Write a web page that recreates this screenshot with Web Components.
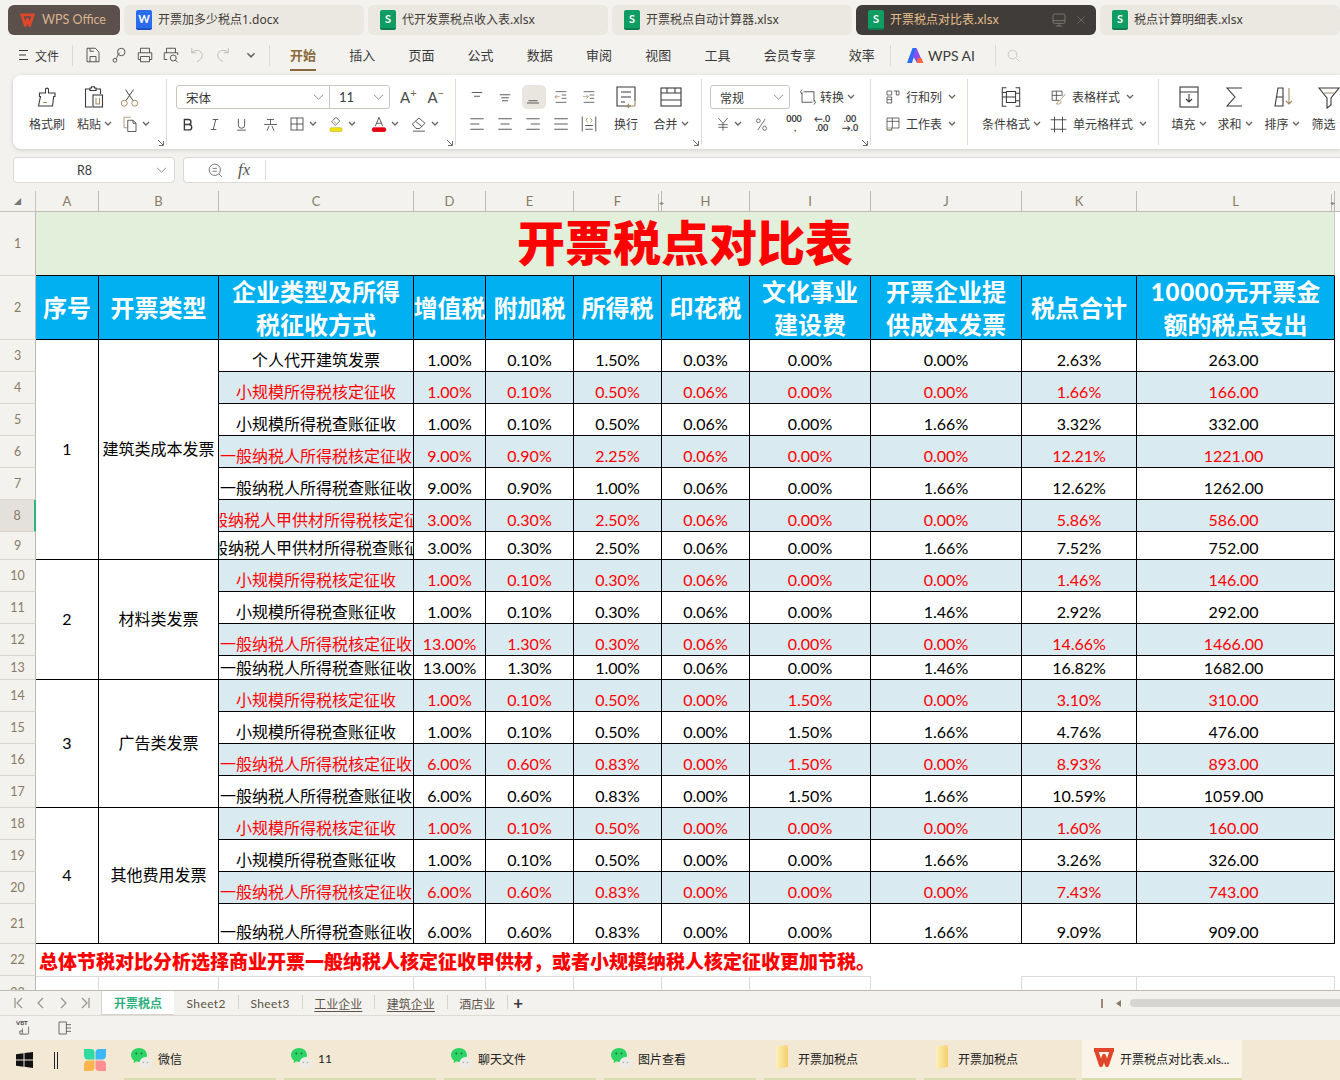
<!DOCTYPE html>
<html lang="zh">
<head>
<meta charset="utf-8">
<title>开票税点对比表</title>
<style>
    html, body { margin: 0; padding: 0; height: 100%; overflow: hidden; }
    body {
        width: 1340px;
        height: 1080px;
        background: #f4f2ee;
        color: #3a3a3a;
        font-family: "Lato", "Noto Sans CJK SC", sans-serif;
        display: flex;
        flex-direction: column;
    }
</style>
</head>
<body>
<wps-tabstrip>
    <wps-tab kind="home">WPS Office</wps-tab>
    <wps-tab kind="w">开票加多少税点1.docx</wps-tab>
    <wps-tab kind="s">代开发票税点收入表.xlsx</wps-tab>
    <wps-tab kind="s">开票税点自动计算器.xlsx</wps-tab>
    <wps-tab kind="s" active>开票税点对比表.xlsx</wps-tab>
    <wps-tab kind="s">税点计算明细表.xlsx</wps-tab>
</wps-tabstrip>
<wps-menubar></wps-menubar>
<wps-ribbon></wps-ribbon>
<wps-formulabar></wps-formulabar>
<wps-sheet></wps-sheet>
<wps-sheettabs></wps-sheettabs>
<wps-statusbar></wps-statusbar>
<wps-taskbar>
    <task-item icon="wechat">微信</task-item>
    <task-item icon="wechat">11</task-item>
    <task-item icon="wechat">聊天文件</task-item>
    <task-item icon="wechat">图片查看</task-item>
    <task-item icon="folder">开票加税点</task-item>
    <task-item icon="folder">开票加税点</task-item>
    <task-item icon="wps" active>开票税点对比表.xls...</task-item>
</wps-taskbar>

<script>
const BROWN = '#a58a63';
const ICONS = {
    brush: `<path d="M10.5 8V4.6a1.5 1.5 0 0 1 3 0V8H20v3.5h-1.3L17.5 21H3.5l2-9.5H4.5V8z"/><path d="M8 17.5h4" stroke="${BROWN}"/>`,
    paste: `<path d="M8 4H3.5v18H10"/><path d="M8 5.5V3h1.5V1.8h3V3H14v2.5z"/><path d="M14 4h4.5v5"/><rect x="11" y="10" width="9.5" height="12"/><path d="M14 13v6h3.5v-6" stroke="${BROWN}"/>`,
    cut: `<circle cx="6" cy="18.5" r="3.4" stroke="${BROWN}"/><circle cx="18" cy="18.5" r="3.4" stroke="${BROWN}"/><path d="M8 15.5 16.5 3M16 15.5 7.5 3"/>`,
    copy: `<path d="M13 3H4v14h4" stroke="${BROWN}"/><path d="M9 7h7l4 4v11H9z"/><path d="M16 7v4h4"/>`,
    bold: `<path d="M7 4h6.5a4 4 0 0 1 0 8H7zM7 12h7.5a4.200 4.200 0 0 1 0 8.500H7z" stroke-width="2.200"/>`,
    italic: `<path d="M9 4h9M6 20h9M14 4l-4 16" stroke-width="1.300"/>`,
    under: `<path d="M7 3v10a5 5 0 0 0 10 0V3M5 21h14" stroke-width="1.300"/>`,
    strike: `<path d="M3 12h18M7 5h10M12 5v7M7 21l3-7M17 21l-3-7"/>`,
    borders: `<rect x="4" y="4" width="16" height="16"/><path d="M12 4v16M4 12h16"/>`,
    fill: `<path d="m12 3-6 6 5 5 6-6z" stroke="#5a5a5a"/><path d="M9 9l3 2" stroke="${BROWN}"/><rect x="4" y="17" width="16" height="5" rx="2" fill="#f5e400" stroke="#c8b84a"/>`,
    color: `<path d="M7 15 12 3l5 12M9 11h6"/><rect x="3" y="17" width="18" height="5" rx="2" fill="#e60012" stroke="#e60012"/>`,
    erase: `<path d="m3 12 9-8 8 7-7 7H8z"/><path d="m7.500 8.500 8 6.500"/><path d="M4 21.500h16"/>`,
    atop: `<path d="M5 6h14M8 11h8"/>`,
    amid: `<path d="M5 9h14M7 13h10M8 17h8"/>`,
    abot: `<path d="M6 17h12M4 20h16" />`,
    outdent: `<path d="M4 4h16M13 9h7M13 14h7M4 20h16"/><path d="M10 11.500H3m3-3-3 3 3 3" stroke="${BROWN}"/>`,
    indent: `<path d="M4 4h16M13 9h7M13 14h7M4 20h16"/><path d="M3 11.500h8m-3-3 3 3-3 3" stroke="${BROWN}"/>`,
    wrap: `<path d="M17 21H3V2h18v14"/><path d="M7 7h10M7 12h10M7 17h4"/><path d="M21 16v5h-8m2-2-2 2 2 2" stroke="${BROWN}"/>`,
    merge: `<rect x="2" y="3" width="20" height="18"/><path d="M2 8h20M2 15h20M8 3v5M16 3v5"/>`,
    hl: `<path d="M3 5h18M3 12h12M3 19h18"/>`,
    hc: `<path d="M3 5h18M6 12h12M3 19h18"/>`,
    hr: `<path d="M3 5h18M9 12h12M3 19h18"/>`,
    hj: `<path d="M3 5h18M3 12h18M3 19h18"/>`,
    dist: `<path d="M3 2v20M21 2v20M7 14h10M7 19h10"/><path d="m10 4-2 3 2 3M14 4l2 3-2 3" stroke="${BROWN}"/>`,
    convert: `<path d="M6 5h14v13M18 19H4V6"/><path d="m4 2-2 3 2 3M20 16l2 3-2 3"/>`,
    yen: `<path d="M5 3l7 8 7-8M5 13h14M5 17h14M12 11v11"/>`,
    pct: `<path d="M18 3 6 21"/><circle cx="7" cy="6" r="3"/><ellipse cx="17" cy="18" rx="3" ry="3.500"/>`,
    rowcol: `<path d="M3 3h7v6H3zM3 12h7v9H3zM3 16h7"/><path d="M13 3h8v6h-4"/><path d="M17 3v6" />`,
    sheet: `<path d="M3 3h18v15H10v3H3z"/><path d="M3 8h18M11 3v15"/><path d="M3 18h8" stroke="${BROWN}"/><path d="M4 21.500h7" stroke="${BROWN}"/>`,
    cond: `<path d="M7 2H2.500v20H7M17 2h4.500v20H17"/><rect x="7" y="6" width="10" height="12"/><path d="M2.500 12H7M17 8h4.500M17 16h4.500M7 12h10M2 7h5"/>`,
    tstyle: `<path d="M13 16H3V3h14v7M3 9h13M9 3v13"/><path d="m22 7-8 9" stroke="${BROWN}"/><path d="M14 16c-3 1-3 4-5 5 4 1 7-1 7-3z" stroke="${BROWN}"/>`,
    cstyle: `<path d="M7 2v20M17 2v20M2 6h20M2 18h20"/>`,
    filldown: `<rect x="3" y="2" width="18" height="20"/><path d="M3 7h18"/><path d="M12 9v8m-3-3 3 3 3-3"/>`,
    sum: `<path d="M19 3H4l8 9-8 9h15"/>`,
    sort: `<path d="M5 21 8 3h5v18zM6.500 12H13"/><path d="M19 3v16m-3-3 3 3 3-3" stroke="${BROWN}"/>`,
    funnel: `<path d="M2 3h20l-8 10v7l-4 3V13z"/><path d="M7 8h10" stroke="${BROWN}"/>`,
    save: `<path d="M4 3h11l5 5v13H4z"/><path d="M8 21v-7h8v7M8 3v4h5"/>`,
    link: `<circle cx="15" cy="8" r="5"/><path d="M13 9c-3 2-3 6-5 8"/><circle cx="6.500" cy="19" r="2.500"/>`,
    print: `<path d="M6 9V3h12v6M6 18H3V9h18v9h-3"/><path d="M6 14h12v7H6z"/>`,
    preview: `<path d="M6 9V3h12v6M7 18H3V9h18v3"/><circle cx="15" cy="16" r="4"/><path d="m18 19 3 3"/>`,
    undo: `<path d="M5 3v6h6"/><path d="M5 9c3-5 14-4 14 3 0 4-3 7-7 9"/>`,
    redo: `<path d="M19 3v6h-6"/><path d="M19 9c-3-5-14-4-14 3 0 4 3 7 7 9"/>`,
    search: `<circle cx="10.500" cy="10.500" r="7"/><path d="m16 16 6 6"/>`,
    zoomout: `<circle cx="11" cy="11" r="8"/><path d="M8 9h6M8 13h6M17 17l4 4"/>`,
    vba: `<path d="M7 12v9H3v-5h4M7 21h8a2 2 0 0 0 2-2V9"/>`,
    panel: `<path d="M14 3H3v18h11M14 7h7M14 12h7M14 17h7"/><path d="M14 3v18" />`,
    monitor: `<rect x="3" y="3" width="18" height="14" rx="2"/><path d="M3 13h18M12 17v4M7 21h10"/>`,
    close: `<path d="m5 5 14 14M19 5 5 19"/>`
};

function icon(name, size = 20, color = 'currentColor', width = 1.1) {
    return `<svg width="${size}" height="${size}" viewBox="0 0 24 24" fill="none" stroke="${color}" stroke-width="${width}" style="display:block;flex:none">${ICONS[name]}</svg>`;
}

const CARET = `<svg width="8" height="5" viewBox="0 0 8 5" fill="none" stroke="#6b6257" stroke-width="1.300" style="display:block;flex:none"><path d="m1 1 3 3 3-3"/></svg>`;
const COMBO_CARET = `<svg width="11" height="6" viewBox="0 0 11 6" fill="none" stroke="#8c8c8c" style="display:block;flex:none"><path d="m1 .8 4.500 4.400L10 .8"/></svg>`;
const WPS_W = (size) => `<svg width="${size}" height="${size}" viewBox="0 0 24 24" fill="none" stroke="#e2462a" stroke-width="4" style="display:block;flex:none"><path d="M2 4h20M4 4l5 15 3-9 3 9 5-15" stroke-linejoin="round"/></svg>`;

class WpsTabstrip extends HTMLElement {
    constructor() {
        super();
        this.attachShadow({ mode: 'open' });
        this.shadowRoot.innerHTML = `
            <style>
                :host { display: flex; gap: 4px; height: 30px; padding: 5px 0 0 8px; flex: none; overflow: hidden; }
            </style>
            <slot></slot>`;
    }
}

class WpsTab extends HTMLElement {
    constructor() {
        super();
        this.attachShadow({ mode: 'open' });
        const kind = this.getAttribute('kind');
        const active = this.hasAttribute('active');
        const badge = kind === 'home' ? WPS_W(17)
            : `<span class="badge ${kind}">${kind.toUpperCase()}</span>`;
        this.shadowRoot.innerHTML = `
            <style>
                :host {
                    display: flex; align-items: center; gap: 6px;
                    box-sizing: border-box; width: 240px; height: 30px; padding: 0 12px;
                    background: #ebe8e2; border-radius: 6px;
                    font-family: "Noto Sans", "Noto Sans CJK SC", sans-serif;
                    font-size: 12px; color: #3f3a36; flex: none;
                }
                :host([kind=home]) { width: 112px; background: #5b504c; color: #d9b48f; padding: 0 11px; font-family: "Lato", sans-serif; font-size: 12.500px; }
                :host([active]) { background: #3f3c3a; color: #e8bf8b; }
                .txt { position: relative; top: -1px; }
                .badge {
                    width: 16px; height: 20px; border-radius: 2px; flex: none;
                    color: #fff; font: bold 11px/18px "Lato", sans-serif; text-align: center;
                    box-sizing: border-box;
                }
                .s { background: #0f9d63; border-bottom: 2px solid #0b7d50; }
                .w { background: #2a6cf0; border-bottom: 2px solid #1c4fc0; }
                .grow { flex: 1; }
                .tools { display: flex; gap: 8px; align-items: center; color: #8d8a85; margin-right: -3px; }
            </style>
            ${badge}<span class="txt"><slot></slot></span>
            ${active ? `<span class="grow"></span><span class="tools">${icon('monitor', 16)}${icon('close', 12)}</span>` : ''}`;
    }
}

class WpsMenubar extends HTMLElement {
    constructor() {
        super();
        this.attachShadow({ mode: 'open' });
        const quick = [['save', '#3a3a3a'], ['link', '#3a3a3a'], ['print', '#3a3a3a'], ['preview', '#3a3a3a'], ['undo', '#b8b4ad'], ['redo', '#b8b4ad']];
        const tabs = ['插入', '页面', '公式', '数据', '审阅', '视图', '工具', '会员专享', '效率'];
        this.shadowRoot.innerHTML = `
            <style>
                :host {
                    display: flex; align-items: center; height: 40px; flex: none; box-sizing: border-box;
                    padding: 0 0 0 19px; font-size: 13px; color: #3a3a3a; white-space: nowrap;
                }
                .file { display: flex; align-items: center; gap: 7px; width: 53px; font-size: 12px; flex: none; }
                .sep { width: 1px; height: 21px; background: #dedbd5; flex: none; }
                .quick { display: flex; align-items: center; gap: 8px; padding-left: 11px; width: 196px; box-sizing: border-box; flex: none; }
                .tabs { display: flex; gap: 33.200px; padding-left: 20px; width: 620px; box-sizing: border-box; flex: none; }
                .tabs span { line-height: 22px; flex: none; }
                .on { color: #8a6a3c; font-weight: 700; position: relative; }
                .on::after { content: ""; position: absolute; left: 0; right: 0; bottom: -5px; height: 2px; background: #8a6a3c; }
                .ai { display: flex; align-items: center; gap: 4px; width: 104px; padding-left: 16px; box-sizing: border-box; font-size: 14px; flex: none; }
                .find { padding-left: 10px; color: #b9b6b0; }
            </style>
            <span class="file"><svg width="9" height="12" viewBox="0 0 9 12" stroke="#3a3a3a"><path d="M0 1.500h9M0 6h7M0 10.500h9"/></svg>文件</span>
            <span class="sep"></span>
            <span class="quick">
                ${quick.map(q => icon(q[0], 18, q[1])).join('')}
                <span style="margin-left:6px">${CARET.replace('width="8" height="5"', 'width="10" height="6"')}</span>
            </span>
            <span class="sep"></span>
            <div class="tabs"><span class="on">开始</span>${tabs.map(t => `<span>${t}</span>`).join('')}</div>
            <span class="sep"></span>
            <span class="ai">
                <svg width="17" height="15" viewBox="0 0 17 15" style="flex:none"><path d="M5.500 0h4L5 15H0z" fill="#2c6cf5"/><path d="M9.500 0 6 8l4 7h6z" fill="#8a4df0"/><path d="M10.500 15h6L14 9.500l-4 1z" fill="#ff6a3c"/></svg>
                WPS AI
            </span>
            <span class="sep"></span>
            <span class="find">${icon('search', 15)}</span>`;
    }
}

// one ribbon button: big = icon over label, otherwise icon, label and caret on a line
class RbBtn extends HTMLElement {
    constructor() {
        super();
        this.attachShadow({ mode: 'open' });
        const name = this.getAttribute('icon');
        const size = this.getAttribute('size') || (this.hasAttribute('big') ? 24 : 16);
        const w = this.getAttribute('w');
        const caret = this.hasAttribute('caret') ? CARET : '';
        const ic = name ? icon(name, size) : '';
        if (w) this.style.width = w + 'px';
        this.shadowRoot.innerHTML = `
            <style>
                :host {
                    display: flex; align-items: center; justify-content: center; gap: 3px; height: 24px;
                    flex: none; box-sizing: border-box; font-size: 12px; color: #3a3a3a; white-space: nowrap;
                }
                :host([big]) { display: grid; grid-template-rows: 24px 24px; row-gap: 3px; height: 51px; justify-items: center; align-items: center; }
                :host([start]) { justify-content: flex-start; gap: 5px; }
                :host([on]) { background: #e9e6e0; border-radius: 5px; }
                .lab { display: flex; align-items: center; gap: 3px; position: relative; top: -1px; }
                :host([start]) .lab { gap: 6px; }
            </style>
            ${ic}<span class="lab"><slot></slot>${caret}</span>`;
    }
}

class RbGroup extends HTMLElement {
    constructor() {
        super();
        this.attachShadow({ mode: 'open' });
        const launcher = this.hasAttribute('launcher')
            ? `<svg class="launch" width="7" height="7" viewBox="0 0 7 7" fill="none" stroke="#6f6a62"><path d="M1 1l5 5M2 6.500h4.500V2"/></svg>` : '';
        this.style.width = this.getAttribute('w') + 'px';
        this.style.paddingLeft = (this.getAttribute('pad') || 8) + 'px';
        this.shadowRoot.innerHTML = `
            <style>
                :host { display: flex; box-sizing: border-box; height: 74px; padding-top: 10px; position: relative; flex: none; }
                .rule { position: absolute; right: 0; top: 4px; bottom: 4px; width: 1px; background: #dfdcd6; }
                .launch { position: absolute; right: 3px; bottom: 3px; }
            </style>
            <slot></slot><span class="rule"></span>${launcher}`;
    }
}

class WpsRibbon extends HTMLElement {
    constructor() {
        super();
        this.attachShadow({ mode: 'open' });
        this.shadowRoot.innerHTML = `
            <style>
                :host {
                    display: flex; height: 74px; margin-left: 13px; flex: none;
                    background: #fff; border-radius: 8px 0 0 8px;
                    box-shadow: 0 1px 4px rgba(0,0,0,.16);
                    overflow: hidden;
                }
                .col { display: flex; flex-direction: column; gap: 3px; }
                .row { display: flex; height: 24px; align-items: center; }
                .combo {
                    display: flex; align-items: center; height: 24px; box-sizing: border-box;
                    border: 1px solid #c9c6c0; border-radius: 3px; font-size: 12px; color: #3a3a3a;
                }
                .combo div { display: flex; align-items: center; justify-content: space-between; box-sizing: border-box; height: 100%; padding: 0 5px 0 9px; }
                .combo div + div { border-left: 1px solid #c9c6c0; }
                .aa { font: 400 15px "Lato", sans-serif; color: #4a4a4a; }
                .aa sup { font-size: 11px; line-height: 0; color: #7a6a55; }
                .num { font: 700 9px/9px "Lato", sans-serif; text-align: center; color: #3a3a3a; white-space: pre; }
            </style>
            <rb-group w="154" pad="10" launcher>
                <rb-btn big icon="brush" w="48">格式刷</rb-btn>
                <rb-btn big icon="paste" w="47" caret>粘贴</rb-btn>
                <div class="col">
                    <rb-btn icon="cut" size="21" w="26"></rb-btn>
                    <rb-btn icon="copy" size="18" caret w="34"></rb-btn>
                </div>
            </rb-group>
            <rb-group w="289" pad="8" launcher>
                <div class="col">
                    <div class="row">
                        <div class="combo" style="width:214px;margin-left:1px">
                            <div style="width:152px;font-size:12.500px">宋体${COMBO_CARET}</div>
                            <div style="flex:1;font:400 13px Lato,sans-serif">11${COMBO_CARET}</div>
                        </div>
                        <span class="aa" style="margin-left:10px">A<sup>+</sup></span>
                        <span class="aa" style="margin-left:11px">A<sup>−</sup></span>
                    </div>
                    <div class="row">
                        <rb-btn icon="bold" size="15" w="27"></rb-btn>
                        <rb-btn icon="italic" size="15" w="27"></rb-btn>
                        <rb-btn icon="under" size="15" w="28"></rb-btn>
                        <rb-btn icon="strike" size="17" w="29"></rb-btn>
                        <rb-btn icon="borders" size="18" caret w="32"></rb-btn>
                        <rb-btn icon="fill" size="18" caret w="47"></rb-btn>
                        <rb-btn icon="color" size="18" caret w="39"></rb-btn>
                        <rb-btn icon="erase" size="18" caret w="40"></rb-btn>
                    </div>
                </div>
            </rb-group>
            <rb-group w="246" pad="8" launcher>
                <div class="col">
                    <div class="row">
                        <rb-btn icon="atop" size="18" w="28"></rb-btn>
                        <rb-btn icon="amid" size="18" w="28"></rb-btn>
                        <rb-btn icon="abot" size="18" w="24" on style="margin:0 2px"></rb-btn>
                        <rb-btn icon="outdent" size="16" w="28"></rb-btn>
                        <rb-btn icon="indent" size="16" w="28"></rb-btn>
                    </div>
                    <div class="row">
                        <rb-btn icon="hl" size="18" w="28"></rb-btn>
                        <rb-btn icon="hc" size="18" w="28"></rb-btn>
                        <rb-btn icon="hr" size="18" w="28"></rb-btn>
                        <rb-btn icon="hj" size="18" w="28"></rb-btn>
                        <rb-btn icon="dist" size="18" w="28"></rb-btn>
                    </div>
                </div>
                <rb-btn big icon="wrap" w="44">换行</rb-btn>
                <rb-btn big icon="merge" w="46" caret>合并</rb-btn>
            </rb-group>
            <rb-group w="169" pad="8" launcher>
                <div class="col">
                    <div class="row">
                        <div class="combo" style="width:80px"><div style="width:100%">常规${COMBO_CARET}</div></div>
                        <rb-btn icon="convert" size="18" caret w="66" style="margin-left:4px">转换</rb-btn>
                    </div>
                    <div class="row">
                        <rb-btn icon="yen" size="16" caret w="36"></rb-btn>
                        <rb-btn icon="pct" size="15" w="34"></rb-btn>
                        <rb-btn w="28"><span class="num">000
 ,</span></rb-btn>
                        <rb-btn w="28"><span class="num">←.0
.00</span></rb-btn>
                        <rb-btn w="28"><span class="num">.00
→.0</span></rb-btn>
                    </div>
                </div>
            </rb-group>
            <rb-group w="97" pad="14">
                <div class="col">
                    <rb-btn icon="rowcol" caret start w="80">行和列</rb-btn>
                    <rb-btn icon="sheet" caret start w="80">工作表</rb-btn>
                </div>
            </rb-group>
            <rb-group w="191" pad="5">
                <rb-btn big icon="cond" size="22" w="77" caret>条件格式</rb-btn>
                <div class="col">
                    <rb-btn icon="tstyle" size="17" caret start w="104">表格样式</rb-btn>
                    <rb-btn icon="cstyle" size="19" caret start w="104" style="margin-left:-1px">单元格样式</rb-btn>
                </div>
            </rb-group>
            <rb-group w="190" pad="7">
                <rb-btn big icon="filldown" w="46" caret>填充</rb-btn>
                <rb-btn big icon="sum" w="46" caret>求和</rb-btn>
                <rb-btn big icon="sort" w="48" caret>排序</rb-btn>
                <rb-btn big icon="funnel" w="46" caret>筛选</rb-btn>
            </rb-group>`;
    }
}

class WpsFormulabar extends HTMLElement {
    constructor() {
        super();
        this.attachShadow({ mode: 'open' });
        this.shadowRoot.innerHTML = `
            <style>
                :host { display: flex; gap: 8px; height: 26px; margin: 8px 0 8px 13px; flex: none; font-size: 12.500px; color: #3a3a3a; }
                .name, .bar { background: #fff; border: 1px solid #dcd9d3; box-sizing: border-box; border-radius: 4px; display: flex; align-items: center; }
                .name { width: 162px; justify-content: space-between; padding: 0 7px 0 63px; }
                .bar { flex: 1; border-right: 0; border-radius: 4px 0 0 4px; padding-left: 23px; color: #555; }
                .fx { font: italic 17px "Liberation Serif", serif; margin-left: 14px; width: 16px; }
                .cut { width: 1px; height: 20px; background: #dcd9d3; margin-left: 11px; }
            </style>
            <div class="name"><span>R8</span>${COMBO_CARET}</div>
            <div class="bar">${icon('zoomout', 17)}<span class="fx">fx</span><span class="cut"></span></div>`;
    }
}

// the sheet: one grid holds the headers and all cells
class WpsSheet extends HTMLElement {
    constructor() {
        super();
        this.attachShadow({ mode: 'open' });
        const xz = '小规模所得税核定征收', xc = '小规模所得税查账征收';
        const yz = '一般纳税人所得税核定征收', yc = '一般纳税人所得税查账征收';
        const jz = '一般纳税人甲供材所得税核定征收', jc = '一般纳税人甲供材所得税查账征收';
        const rows = [
            ['个人代开建筑发票', '1.00%', '0.10%', '1.50%', '0.03%', '0.00%', '0.00%', '2.63%', '263.00'],
            [xz, '1.00%', '0.10%', '0.50%', '0.06%', '0.00%', '0.00%', '1.66%', '166.00'],
            [xc, '1.00%', '0.10%', '0.50%', '0.06%', '0.00%', '1.66%', '3.32%', '332.00'],
            [yz, '9.00%', '0.90%', '2.25%', '0.06%', '0.00%', '0.00%', '12.21%', '1221.00'],
            [yc, '9.00%', '0.90%', '1.00%', '0.06%', '0.00%', '1.66%', '12.62%', '1262.00'],
            [jz, '3.00%', '0.30%', '2.50%', '0.06%', '0.00%', '0.00%', '5.86%', '586.00'],
            [jc, '3.00%', '0.30%', '2.50%', '0.06%', '0.00%', '1.66%', '7.52%', '752.00'],
            [xz, '1.00%', '0.10%', '0.30%', '0.06%', '0.00%', '0.00%', '1.46%', '146.00'],
            [xc, '1.00%', '0.10%', '0.30%', '0.06%', '0.00%', '1.46%', '2.92%', '292.00'],
            [yz, '13.00%', '1.30%', '0.30%', '0.06%', '0.00%', '0.00%', '14.66%', '1466.00'],
            [yc, '13.00%', '1.30%', '1.00%', '0.06%', '0.00%', '1.46%', '16.82%', '1682.00'],
            [xz, '1.00%', '0.10%', '0.50%', '0.00%', '1.50%', '0.00%', '3.10%', '310.00'],
            [xc, '1.00%', '0.10%', '0.50%', '0.00%', '1.50%', '1.66%', '4.76%', '476.00'],
            [yz, '6.00%', '0.60%', '0.83%', '0.00%', '1.50%', '0.00%', '8.93%', '893.00'],
            [yc, '6.00%', '0.60%', '0.83%', '0.00%', '1.50%', '1.66%', '10.59%', '1059.00'],
            [xz, '1.00%', '0.10%', '0.50%', '0.00%', '0.00%', '0.00%', '1.60%', '160.00'],
            [xc, '1.00%', '0.10%', '0.50%', '0.00%', '0.00%', '1.66%', '3.26%', '326.00'],
            [yz, '6.00%', '0.60%', '0.83%', '0.00%', '0.00%', '0.00%', '7.43%', '743.00'],
            [yc, '6.00%', '0.60%', '0.83%', '0.00%', '0.00%', '1.66%', '9.09%', '909.00']
        ];
        const heads = ['序号', '开票类型', '企业类型及所得<br>税征收方式', '增值税', '附加税', '所得税', '印花税', '文化事业<br>建设费', '开票企业提<br>供成本发票', '税点合计', '<b style="letter-spacing:.8px">10000</b>元开票金<br>额的税点支出'];
        const letters = ['A', 'B', 'C', 'D', 'E', 'F', 'H', 'I', 'J', 'K', 'L'];
        const groups = [['1', '建筑类成本发票', 4, 11], ['2', '材料类发票', 11, 15], ['3', '广告类发票', 15, 19], ['4', '其他费用发票', 19, 23]];

        const cell = (cls, col, row, html, colEnd = col + 1, rowEnd = row + 1) =>
            `<div class="${cls}" style="grid-area:${row}/${col}/${rowEnd}/${colEnd}"><span>${html}</span></div>`;

        let html = cell('corner', 1, 1, '◢');
        letters.forEach((l, i) => { html += cell('colh', i + 2, 1, l); });
        html += cell('colh tail', 13, 1, '');

        // grid line numbers sit one above the sheet row, the letter row is line 1
        for (let r = 1; r <= 23; r++) {
            const cls = r === 8 ? 'rowh sel' : r === 23 ? 'rowh cutoff' : 'rowh';
            html += cell(cls, 1, r + 1, r);
        }
        html += cell('title', 2, 2, '开票税点对比表', 13);
        heads.forEach((h, i) => { html += cell('head', i + 2, 3, h); });
        groups.forEach(g => {
            html += cell('data merged', 2, g[2], g[0], 3, g[3]);
            html += cell('data merged', 3, g[2], g[1], 4, g[3]);
        });
        rows.forEach((r, i) => {
            const base = i % 2 === 1 ? 'data alt' : 'data';
            r.forEach((t, c) => { html += cell(c === 8 ? base + ' last' : base, c + 4, i + 4, t); });
        });
        html += cell('note', 2, 23, '总体节税对比分析选择商业开票一般纳税人核定征收甲供材，或者小规模纳税人核定征收更加节税。', 13);
        for (let c = 2; c <= 12; c++) {
            html += cell(c === 10 ? 'blank skip' : 'blank', c, 24, '');
        }

        this.shadowRoot.innerHTML = `
            <style>
                :host { display: block; height: 799px; flex: none; background: #fff; position: relative; overflow: hidden; }
                .grid {
                    display: grid;
                    grid-template-columns: 36px 63px 120px 195px 72px 88px 88px 88px 121px 151px 115px 198px 6px;
                    grid-template-rows: 21px 64px 64px repeat(6, 32px) 28px repeat(3, 32px) 24px repeat(7, 32px) 40px 32px 14px;
                    font-size: 16px; color: #000; background: #fff;
                }
                .grid > div { box-sizing: border-box; display: flex; justify-content: center; align-items: center; overflow: hidden; white-space: nowrap; min-width: 0; }
                .grid span { flex: none; }
                .corner { background: #f4f2ee; color: #777; font-size: 7px; border-right: 1px solid #c6c3bd; border-bottom: 1px solid #c6c3bd; }
                .colh { background: #f4f2ee; border-right: 1px solid #bdbab4; border-bottom: 1px solid #bdbab4; color: #8a7a65; font-size: 13px; }
                .tail { border-right: 0; }
                .rowh { background: #f4f2ee; border-right: 1px solid #bdbab4; border-bottom: 1px solid #d8d5cf; color: #8a7a65; font-size: 12.500px; }
                .sel { background: #e4e1dc; border-right: 2px solid #2fb380; }
                .cutoff { align-items: flex-start !important; padding-top: 9px; border-bottom: 0; }
                .title { background: #e2efda; color: #ff0000; font-size: 48px; font-weight: 900; border-bottom: 1px solid #000; border-right: 1px solid #c9c9c9; padding-bottom: 8px; }
                .head { background: #00b0f0; color: #fff; font-size: 24px; font-weight: 700; line-height: 33px; text-align: center; border-right: 1px solid #000; border-bottom: 1px solid #000; }
                .data { border-right: 1px solid #000; border-bottom: 1px solid #000; align-items: flex-end !important; line-height: 23px; }
                .merged { align-items: center !important; padding-bottom: 2px; }
                .last { padding-right: 4px; }
                .alt { background: #daeaf1; color: #ff0000; }
                .note { color: #ff0000; font-size: 19px; font-weight: 900; justify-content: flex-start !important; padding: 0 0 0 3px; }
                .blank { border-right: 1px solid #dcdcdc; border-top: 1px solid #dcdcdc; }
                .skip { border-top: 0; }
                .mark { position: absolute; top: 8px; width: 8px; height: 8px; color: #8a8a8a; font-size: 6px; line-height: 8px; letter-spacing: -1px; }
                .dbl { position: absolute; top: 3px; height: 17px; width: 2px; border-left: 1px solid #bdbab4; }
            </style>
            <div class="grid">${html}</div>
            <span class="dbl" style="left:658px"></span><span class="mark" style="left:659px">◂▸</span>
            <span class="dbl" style="left:1331px"></span><span class="mark" style="left:1330px">◂▸</span>`;
    }
}

class WpsSheettabs extends HTMLElement {
    constructor() {
        super();
        this.attachShadow({ mode: 'open' });
        const nav = '<svg width="10" height="12" viewBox="0 0 10 12" fill="none" stroke="#9a968f" stroke-width="1.300">';
        this.shadowRoot.innerHTML = `
            <style>
                :host {
                    display: flex; align-items: stretch; height: 26px; box-sizing: border-box; flex: none;
                    border-top: 1px solid #bdbab4; border-bottom: 1px solid #dedbd5;
                    font-size: 12px; color: #5c5247;
                }
                .nav { display: flex; align-items: center; width: 102px; box-sizing: border-box; padding-left: 14px; gap: 12px; border-right: 1px solid #d6d3cd; }
                .tab { display: flex; align-items: center; padding: 0 12px 0 12.500px; position: relative; }
                .tab + .tab::before { content: ""; position: absolute; left: 0; top: 4px; bottom: 6px; width: 1px; background: #d6d3cd; }
                .on { background: #fff; color: #2bb07c; font-weight: 700; width: 72px; padding: 0; justify-content: center; box-sizing: border-box; border-bottom: 1px solid #d6d3cd; }
                .on + .tab::before { display: none; }
                .lat { letter-spacing: .4px; }
                .u { text-decoration: underline; text-underline-offset: 2px; }
                .add { display: flex; align-items: center; padding-left: 5px; font: 700 17px "Lato", sans-serif; color: #3a3a3a; border-left: 1px solid #d6d3cd; margin: 4px 0 6px; }
                .grow { flex: 1; }
                .scroll { display: flex; align-items: center; gap: 13px; color: #8a7a65; width: 239px; }
                .thumb { flex: 1; height: 8px; border-radius: 4px 0 0 4px; background: #d6d5d2; margin-left: -4px; }
            </style>
            <div class="nav">
                ${nav}<path d="M1 1v10M8 1 3 6l5 5"/></svg>
                ${nav}<path d="M7 1 2 6l5 5"/></svg>
                ${nav}<path d="m3 1 5 5-5 5"/></svg>
                ${nav}<path d="M9 1v10M2 1l5 5-5 5"/></svg>
            </div>
            <div class="tab on">开票税点</div>
            <div class="tab lat">Sheet2</div>
            <div class="tab lat">Sheet3</div>
            <div class="tab u">工业企业</div>
            <div class="tab u">建筑企业</div>
            <div class="tab">酒店业</div>
            <div class="add" style="width:20px;box-sizing:border-box">+</div>
            <div class="grow"></div>
            <div class="scroll">
                <svg width="2" height="9"><rect width="2" height="9" fill="#9a8a75"/></svg>
                <svg width="5" height="7" viewBox="0 0 5 7" fill="#8a7a65"><path d="M5 0v7L0 3.500z"/></svg>
                <div class="thumb"></div>
            </div>`;
    }
}

class WpsStatusbar extends HTMLElement {
    constructor() {
        super();
        this.attachShadow({ mode: 'open' });
        this.shadowRoot.innerHTML = `
            <style>
                :host { display: flex; align-items: center; height: 24px; padding-left: 16px; gap: 25px; flex: none; color: #3a3a3a; }
                .vb { position: relative; width: 16px; height: 16px; }
                .vb b { position: absolute; left: 0; top: -1px; font: 700 6px/7px "Lato", sans-serif; }
                .vb svg { position: absolute; left: 2px; top: 1px; }
            </style>
            <span class="vb"><b>VBT</b>${icon('vba', 15)}</span>
            ${icon('panel', 16)}`;
    }
}

class WpsTaskbar extends HTMLElement {
    constructor() {
        super();
        this.attachShadow({ mode: 'open' });
        this.shadowRoot.innerHTML = `
            <style>
                :host { display: flex; height: 40px; background: #f2e8d3; flex: none; overflow: hidden; }
                .sys { display: flex; align-items: center; width: 124px; flex: none; padding-left: 16px; box-sizing: border-box; }
                .bars { width: 4px; height: 17px; border-left: 1px solid #222; border-right: 1px solid #222; margin: 0 25px 0 21px; box-sizing: border-box; flex: none; }
                .items { display: flex; gap: 8px; }
            </style>
            <div class="sys">
                <svg width="17" height="16" viewBox="0 0 17 16" fill="#111" style="flex:none"><path d="M0 2.300 7.500 1.200v6.300H0zM8.500 1l8.500-1v7.500H8.500zM0 8.500h7.500v6.300L0 13.700zM8.500 8.500H17V16l-8.500-1.200z"/></svg>
                <span class="bars"></span>
                <svg width="24" height="24" viewBox="0 0 24 24" style="flex:none">
                    <path d="M1 1h7q3.500 0 3.500 3.500v7H5Q1 11.500 1 7z" fill="#2fdba0"/>
                    <path d="M23 1h-7q-3.500 0-3.500 3.500v7H19q4 0 4-4.500z" fill="#3cb8f6"/>
                    <path d="M1 23h7q3.500 0 3.500-3.500v-7H5Q1 12.500 1 17z" fill="#fab54f"/>
                    <path d="M23 23h-7q-3.500 0-3.500-3.500v-7H19q4 0 4 4.500z" fill="#fb8f8f"/>
                </svg>
            </div>
            <div class="items"><slot></slot></div>`;
    }
}

class TaskItem extends HTMLElement {
    constructor() {
        super();
        this.attachShadow({ mode: 'open' });
        const kind = this.getAttribute('icon');
        const art = {
            wechat: `<svg width="22" height="22" viewBox="0 0 22 22" style="flex:none"><path d="M9 1C4.500 1 1 4 1 8c0 2.300 1.200 4.200 3 5.500L3.500 16l3-1.500c.8.200 1.600.400 2.500.400 4.500 0 8-3 8-7s-3.500-7-8-7z" fill="#2fd467"/><circle cx="6.300" cy="6.500" r="1" fill="#137a3a"/><circle cx="11.500" cy="6.500" r="1" fill="#137a3a"/><circle cx="15.500" cy="16" r="6" fill="#ecebe8"/><circle cx="13.300" cy="15.500" r=".8" fill="#aaa"/><circle cx="17.500" cy="15.500" r=".8" fill="#aaa"/></svg>`,
            folder: `<svg width="14" height="26" viewBox="0 0 14 26" style="flex:none"><defs><linearGradient id="f" x1="0" x2="1" y1="0" y2="0"><stop offset="0" stop-color="#fdf0b8"/><stop offset="1" stop-color="#f6cf6c"/></linearGradient></defs><path d="M1 2 12 0l1 3v19l-12 2z" fill="url(#f)"/></svg>`,
            wps: WPS_W(24)
        }[kind];
        const gap = kind === 'wps' ? 4 : kind === 'folder' ? 9 : 6;
        this.shadowRoot.innerHTML = `
            <style>
                :host {
                    display: flex; align-items: center; box-sizing: border-box;
                    width: 152px; height: 40px; padding: 0 6px 2px; gap: ${gap}px;
                    border-bottom: 2px solid #d9dcae; font-size: 12px; color: #222; flex: none; white-space: nowrap;
                }
                :host([icon=folder]) { padding-left: 11px; }
                :host([active]) { width: 160px; margin-left: -2px; background: #faf4e8; padding-left: 10px; }
            </style>
            ${art}<slot></slot>`;
    }
}

customElements.define('wps-tabstrip', WpsTabstrip);
customElements.define('wps-tab', WpsTab);
customElements.define('wps-menubar', WpsMenubar);
customElements.define('rb-btn', RbBtn);
customElements.define('rb-group', RbGroup);
customElements.define('wps-ribbon', WpsRibbon);
customElements.define('wps-formulabar', WpsFormulabar);
customElements.define('wps-sheet', WpsSheet);
customElements.define('wps-sheettabs', WpsSheettabs);
customElements.define('wps-statusbar', WpsStatusbar);
customElements.define('wps-taskbar', WpsTaskbar);
customElements.define('task-item', TaskItem);
</script>
</body>
</html>
